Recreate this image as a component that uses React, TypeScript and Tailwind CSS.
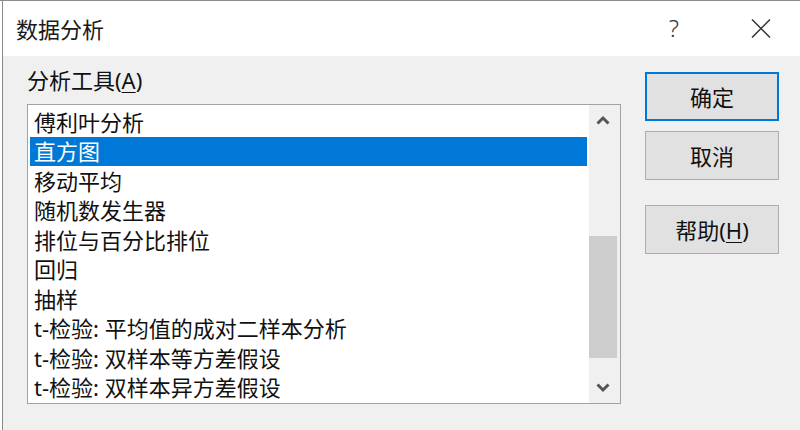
import React from "react";

const tools = [
  "傅利叶分析",
  "直方图",
  "移动平均",
  "随机数发生器",
  "排位与百分比排位",
  "回归",
  "抽样",
  "t-检验: 平均值的成对二样本分析",
  "t-检验: 双样本等方差假设",
  "t-检验: 双样本异方差假设",
];

const font = { fontFamily: '"Noto Sans", "Noto Sans CJK SC", sans-serif' };

const Chevron = ({ up }: { up?: boolean }) => (
  <svg width="14" height="10" viewBox="0 0 14 10">
    <path
      d={up ? "M1.5 8.5 L7 3 L12.5 8.5" : "M1.5 1.5 L7 7 L12.5 1.5"}
      fill="none"
      stroke="#555"
      strokeWidth="3"
    />
  </svg>
);

const DialogButton = ({ children, primary }: { children: React.ReactNode; primary?: boolean }) => (
  <div
    className={`w-[134px] h-[49px] flex items-center justify-center bg-[#e1e1e1] text-[22px] leading-none text-[#111] ${
      primary ? "border-2 border-[#0078d7]" : "border border-[#adadad]"
    }`}
  >
    {children}
  </div>
);

export default function App() {
  return (
    <div className="w-[800px] h-[430px] overflow-hidden bg-white pl-[2px] border-t border-[#8c8c8c]" style={font}>
      <div className="h-full flex flex-col border-l border-[#8a8a8a]">
        {/* title bar */}
        <div className="h-[55px] shrink-0 bg-white flex items-center pl-[13px]">
          <span className="text-[22px] leading-none text-[#1a1a1a]">数据分析</span>
          <span className="ml-auto text-[24px] leading-none font-light text-[#333] mb-[1px]">?</span>
          <svg className="ml-[72px] mr-[29px]" width="20" height="19" viewBox="0 0 20 19">
            <path d="M1 0.5 L19 18.5 M19 0.5 L1 18.5" stroke="#333" strokeWidth="1.5" fill="none" />
          </svg>
        </div>

        {/* body */}
        <div className="flex-1 bg-[#f0f0f0] flex pl-[24px]">
          <div className="flex flex-col">
            <div className="h-[48px] flex items-center text-[22px] leading-none text-[#111]">
              分析工具(<span className="underline underline-offset-[3px] decoration-1">A</span>)
            </div>
            <div className="w-[594px] h-[300px] border border-[#a2a2a2] bg-white flex">
              <div className="flex-1 px-[2px] pt-[2px]">
                {tools.map((t, i) => (
                  <div
                    key={t}
                    className={`h-[29.5px] flex items-center pl-[4px] text-[22px] leading-none whitespace-nowrap ${
                      i === 1 ? "bg-[#0078d7] text-white" : "text-[#111]"
                    }`}
                  >
                    {t}
                  </div>
                ))}
              </div>
              <div className="w-[31px] bg-[#f0f0f0] flex flex-col">
                <div className="h-[30px] flex items-center justify-center pr-[3px]">
                  <Chevron up />
                </div>
                <div className="flex-1 flex flex-col">
                  <div className="mt-[101px] w-[28px] h-[122px] bg-[#cdcdcd]" />
                </div>
                <div className="h-[30px] flex items-center justify-center pr-[3px]">
                  <Chevron />
                </div>
              </div>
            </div>
          </div>

          <div className="flex flex-col pl-[24px] pt-[16px]">
            <DialogButton primary>确定</DialogButton>
            <div className="h-[10px]" />
            <DialogButton>取消</DialogButton>
            <div className="h-[25px]" />
            <DialogButton>
              帮助(<span className="underline underline-offset-[3px] decoration-1">H</span>)
            </DialogButton>
          </div>
        </div>
      </div>
    </div>
  );
}
